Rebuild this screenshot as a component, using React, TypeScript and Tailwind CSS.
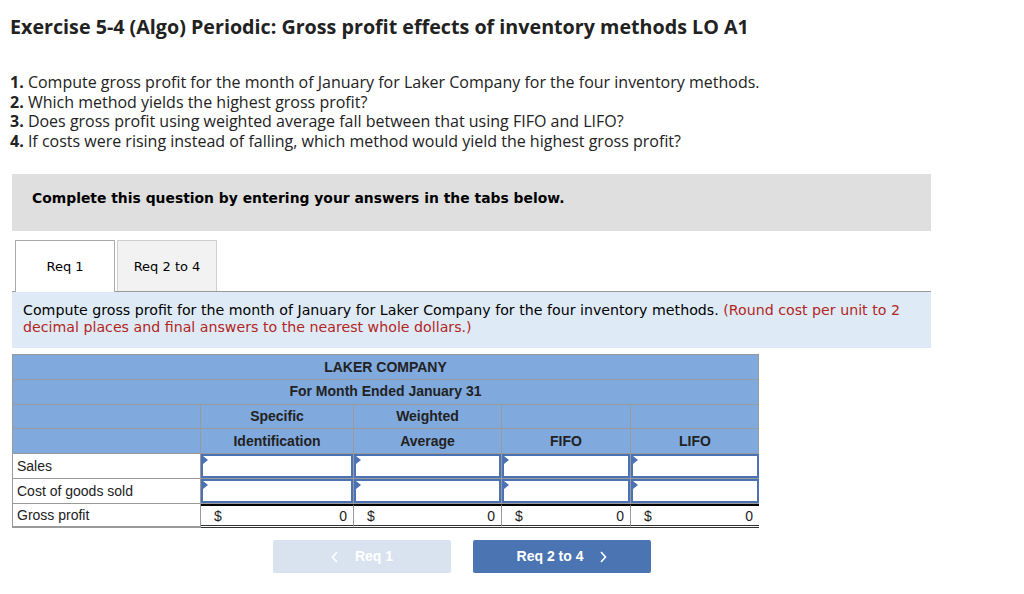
import React from "react";

const cols = "grid grid-cols-[188px_153px_148px_129px_128px]";

function InputCell({ last }: { last?: boolean }) {
  return (
    <div className={`h-[24.7px] border-b border-[#9a9a9a] ${last ? "" : "border-r"} bg-white p-0`}>
      <div className="relative h-full border-2 border-[#4a72b4] bg-white">
        <span className="absolute left-0 top-0 h-0 w-0 border-y-[4px] border-l-[5px] border-y-transparent border-l-[#4a72b4]" />
      </div>
    </div>
  );
}

function ValueCell({ last }: { last?: boolean }) {
  return (
    <div
      className={`flex h-[24.7px] items-center justify-between border-t-2 border-t-black border-b-[3px] border-b-[#333] border-double ${
        last ? "" : "border-r border-r-[#9a9a9a]"
      } pl-[13px] pr-[6px] pt-[2px] bg-white`}
    >
      <span>$</span>
      <span>0</span>
    </div>
  );
}

export default function App() {
  return (
    <div className="min-h-[594px] w-[1024px] bg-white text-[#222]">
      <h1 className="pl-[10px] pt-[13px] text-[19.7px] font-bold leading-[28px] text-[#222] [font-family:'Open_Sans',Lato,sans-serif]">
        Exercise 5-4 (Algo) Periodic: Gross profit effects of inventory methods LO A1
      </h1>

      <div className="mt-[32px] pl-[10px] text-[16px] leading-[19.6px] text-[#222] [font-family:'Open_Sans',Lato,sans-serif]">
        <p>
          <b>1.</b> Compute gross profit for the month of January for Laker Company for the four inventory methods.
        </p>
        <p>
          <b>2.</b> Which method yields the highest gross profit?
        </p>
        <p>
          <b>3.</b> Does gross profit using weighted average fall between that using FIFO and LIFO?
        </p>
        <p>
          <b>4.</b> If costs were rising instead of falling, which method would yield the highest gross profit?
        </p>
      </div>

      <div className="ml-[12px] mt-[23px] flex h-[57px] w-[919px] items-center bg-[#dfdfdf] pb-[8px] pl-[20px] text-[13.9px] font-bold text-black [font-family:'DejaVu_Sans',Verdana,sans-serif]">
        Complete this question by entering your answers in the tabs below.
      </div>

      <div className="ml-[12px] mt-[9px] w-[919px] [font-family:'DejaVu_Sans',Verdana,sans-serif]">
        <div className="flex items-end border-b border-[#999]">
          <div className="ml-[3px] -mb-px flex h-[52px] w-[100px] items-center justify-center border border-b-0 border-[#aaa] bg-white text-[13px] text-black">
            Req 1
          </div>
          <div className="ml-[2px] flex h-[51px] w-[100px] items-center justify-center border border-b-0 border-[#cfcfcf] bg-[#f2f2f2] text-[13px] text-black">
            Req 2 to 4
          </div>
        </div>
        <div className="h-[56px] bg-[#deebf7] px-[11px] pt-[10px] text-[14.2px] leading-[17px] text-black">
          Compute gross profit for the month of January for Laker Company for the four inventory methods.{" "}
          <span className="text-[#b3261e]">
            (Round cost per unit to 2 decimal places and final answers to the nearest whole dollars.)
          </span>
        </div>
      </div>

      <div className="ml-[12px] mt-[6px] w-[747px] border-l border-t border-r border-[#9a9a9a] text-[14px] text-[#222] [font-family:'Liberation_Sans',Arial,sans-serif]">
        <div className="flex h-[24.7px] items-center justify-center border-b border-[#9a9a9a] bg-[#80a9de] font-bold">
          LAKER COMPANY
        </div>
        <div className="flex h-[24.7px] items-center justify-center border-b border-[#9a9a9a] bg-[#80a9de] font-bold">
          For Month Ended January 31
        </div>
        <div className={`${cols} bg-[#80a9de] font-bold`}>
          <div className="h-[24.7px] border-b border-r border-[#9a9a9a]" />
          <div className="flex h-[24.7px] items-center justify-center border-b border-r border-[#9a9a9a]">Specific</div>
          <div className="flex h-[24.7px] items-center justify-center border-b border-r border-[#9a9a9a]">Weighted</div>
          <div className="h-[24.7px] border-b border-r border-[#9a9a9a]" />
          <div className="h-[24.7px] border-b border-[#9a9a9a]" />
        </div>
        <div className={`${cols} bg-[#80a9de] font-bold`}>
          <div className="h-[24.7px] border-b border-r border-[#9a9a9a]" />
          <div className="flex h-[24.7px] items-center justify-center border-b border-r border-[#9a9a9a]">Identification</div>
          <div className="flex h-[24.7px] items-center justify-center border-b border-r border-[#9a9a9a]">Average</div>
          <div className="flex h-[24.7px] items-center justify-center border-b border-r border-[#9a9a9a]">FIFO</div>
          <div className="flex h-[24.7px] items-center justify-center border-b border-[#9a9a9a]">LIFO</div>
        </div>
        <div className={cols}>
          <div className="flex h-[24.7px] items-center border-b border-r border-[#9a9a9a] pl-[4px] pt-[1px]">Sales</div>
          <InputCell />
          <InputCell />
          <InputCell />
          <InputCell last />
        </div>
        <div className={cols}>
          <div className="flex h-[24.7px] items-center border-b border-r border-[#9a9a9a] pl-[4px] pt-[1px]">Cost of goods sold</div>
          <InputCell />
          <InputCell />
          <InputCell />
          <InputCell last />
        </div>
        <div className={cols}>
          <div className="flex h-[24.7px] items-center border-b-2 border-r border-[#9a9a9a] pl-[4px] pt-[2px]">Gross profit</div>
          <ValueCell />
          <ValueCell />
          <ValueCell />
          <ValueCell last />
        </div>
      </div>

      <div className="mt-[12px] flex gap-[22px] pl-[273px] text-[14px] font-bold text-white [font-family:'Liberation_Sans',Arial,sans-serif]">
        <div className="flex h-[33px] w-[178px] items-center justify-center gap-[16px] rounded-[2px] bg-[#d9e3f0]">
          <svg width="8" height="12" viewBox="0 0 8 12" fill="none" stroke="white" strokeWidth="1.6">
            <path d="M6 1 L1.5 6 L6 11" />
          </svg>
          <span>Req 1</span>
        </div>
        <div className="flex h-[33px] w-[178px] items-center justify-center gap-[16px] rounded-[2px] bg-[#4a74b2]">
          <span>Req 2 to 4</span>
          <svg width="8" height="12" viewBox="0 0 8 12" fill="none" stroke="white" strokeWidth="1.6">
            <path d="M2 1 L6.5 6 L2 11" />
          </svg>
        </div>
      </div>
    </div>
  );
}
